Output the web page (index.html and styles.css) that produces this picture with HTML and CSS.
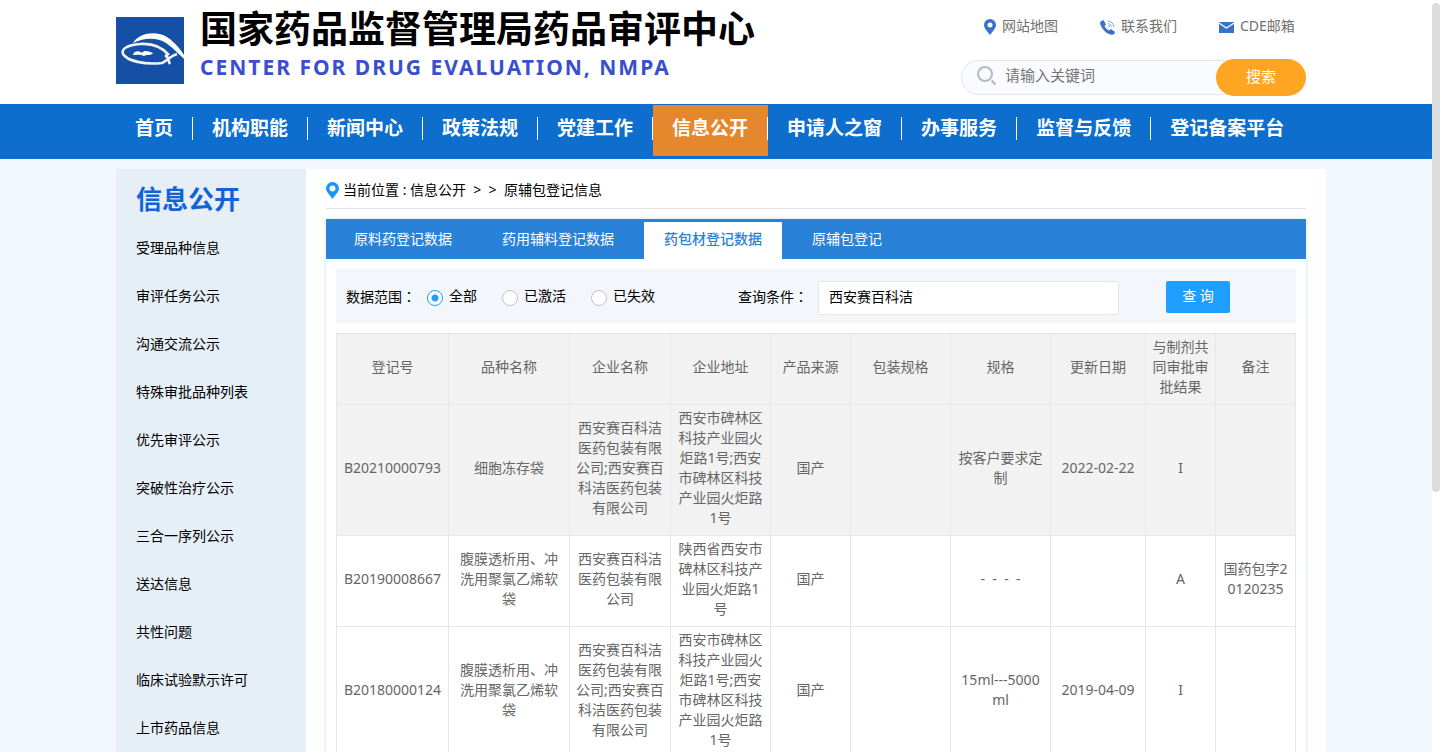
FILE: index.html
```html
<!DOCTYPE html>
<html lang="zh-CN">
<head>
<meta charset="utf-8">
<title>国家药品监督管理局药品审评中心</title>
<link rel="stylesheet" href="styles.css">
</head>
<body>
<div class="page">
  <header class="header">
    <div class="wrap header-row">
      <a class="brand" href="#">
        <svg class="logo" viewBox="0 0 74 68" aria-hidden="true">
          <rect width="68" height="67" fill="#1650a5"/>
          <path d="M17 26C24 15 41 14 51 20C60 26 66 34 73 46C66 41 59 32 50 26C40 20 28 21 17 26Z" fill="#fff"/>
          <path d="M53 38C46 30 36 26 24 27C11 28 5 32 7 37C11 44 29 48 46 46C51 44 54 39 61 37M49 38C53 40 52 44 54 47" fill="none" stroke="#f1f3f8" stroke-width="2.600" stroke-linejoin="round"/>
          <path d="M17 38C18 33 24 34 26 36C28 33 32 34 37 36C35 39 31 37 28 39C24 37 20 38 17 38Z" fill="#fff"/>
        </svg>
        <span class="brand-text">
          <span class="brand-cn">国家药品监督管理局药品审评中心</span>
          <span class="brand-en">CENTER FOR DRUG EVALUATION, NMPA</span>
        </span>
      </a>
      <div class="tools">
        <div class="quick">
          <a href="#"><svg width="12" height="16" viewBox="0 0 12 16" aria-hidden="true"><path fill-rule="evenodd" fill="#3674c9" d="M6 0a6 6 0 0 0-6 6c0 3 3 6 6 10 3-4 6-7 6-10a6 6 0 0 0-6-6zm0 3.500a2.500 2.500 0 1 1 0 5 2.500 2.500 0 0 1 0-5z"/></svg><span>网站地图</span></a>
          <a href="#"><svg width="15" height="15" viewBox="0 0 15 15" aria-hidden="true"><path fill="#3674c9" d="M.5 1.500L3.500 0 6 4.500 4.500 6C5.200 7.800 7 9.600 9 10.500L11 9 15 12 14 14.300C12 15.500 8 14.500 4.500 11 1 7.500-.7 3.500.5 1.500z"/><path fill="none" stroke="#7ba5de" d="M8 3.500q3 .5 3.500 3.500M8 1q5 .7 6 6M8 5.500q1 .3 1.500 1.500"/></svg><span>联系我们</span></a>
          <a href="#"><svg width="15" height="11" viewBox="0 0 15 11" aria-hidden="true"><path fill="#3674c9" d="M0 0h15v11H0z"/><path fill="none" stroke="#fff" stroke-width="1.300" d="M0 1l7.500 5L15 1"/></svg><span>CDE邮箱</span></a>
        </div>
        <form class="search">
          <svg width="20" height="20" viewBox="0 0 20 20" aria-hidden="true"><circle cx="8" cy="8" r="7" fill="none" stroke="#b9b9b9" stroke-width="2"/><path d="M14.500 14.500l4 4" stroke="#b9b9b9" stroke-width="2.200"/></svg>
          <input type="text" placeholder="请输入关键词" aria-label="请输入关键词">
          <button type="button">搜索</button>
        </form>
      </div>
    </div>
  </header>

  <nav class="nav">
    <div class="wrap nav-row">
      <a href="#">首页</a>
      <a href="#">机构职能</a>
      <a href="#">新闻中心</a>
      <a href="#">政策法规</a>
      <a href="#">党建工作</a>
      <a class="active" href="#">信息公开</a>
      <a href="#">申请人之窗</a>
      <a href="#">办事服务</a>
      <a href="#">监督与反馈</a>
      <a href="#">登记备案平台</a>
    </div>
  </nav>

  <div class="wrap">
    <div class="body-row">
      <aside class="side">
        <h2>信息公开</h2>
        <ul>
          <li><a href="#">受理品种信息</a></li>
          <li><a href="#">审评任务公示</a></li>
          <li><a href="#">沟通交流公示</a></li>
          <li><a href="#">特殊审批品种列表</a></li>
          <li><a href="#">优先审评公示</a></li>
          <li><a href="#">突破性治疗公示</a></li>
          <li><a href="#">三合一序列公示</a></li>
          <li><a href="#">送达信息</a></li>
          <li><a href="#">共性问题</a></li>
          <li><a href="#">临床试验默示许可</a></li>
          <li><a href="#">上市药品信息</a></li>
        </ul>
      </aside>

      <main class="main">
        <div class="crumb">
          <svg width="13" height="17" viewBox="0 0 13 17" aria-hidden="true"><path fill-rule="evenodd" fill="#1a94f5" d="M6.500 0A6.500 6.500 0 0 0 0 6.500C0 10 4 13 6.500 17 9 13 13 10 13 6.500A6.500 6.500 0 0 0 6.500 0zm0 3.500a3 3 0 1 1 0 6 3 3 0 0 1 0-6z"/></svg>
          <span>当前位置 : 信息公开&nbsp; &gt;&nbsp; &gt;&nbsp; 原辅包登记信息</span>
        </div>
        <section class="panel">
          <div class="tabs">
            <a href="#">原料药登记数据</a>
            <a href="#">药用辅料登记数据</a>
            <a class="active" href="#">药包材登记数据</a>
            <a href="#">原辅包登记</a>
          </div>
          <div class="panel-body">
            <form class="filter">
              <span class="label">数据范围<span class="colon" lang="zh-TW">：</span></span>
              <div class="radios">
                <label><input type="radio" name="range" checked><span>全部</span></label>
                <label><input type="radio" name="range"><span>已激活</span></label>
                <label><input type="radio" name="range"><span>已失效</span></label>
              </div>
              <label class="label" for="q">查询条件<span class="colon" lang="zh-TW">：</span></label>
              <input class="query" id="q" type="text" value="西安赛百科洁">
              <button type="button">查 询</button>
            </form>
            <table class="grid">
              <colgroup>
                <col class="c-no"><col class="c-name"><col class="c-corp"><col class="c-mid"><col class="c-src"><col class="c-mid"><col class="c-mid"><col class="c-date"><col class="c-res"><col class="c-src">
              </colgroup>
              <thead>
                <tr><th>登记号</th><th>品种名称</th><th>企业名称</th><th>企业地址</th><th>产品来源</th><th>包装规格</th><th>规格</th><th>更新日期</th><th>与制剂共同审批审批结果</th><th>备注</th></tr>
              </thead>
              <tbody>
                <tr class="hover"><td>B20210000793</td><td>细胞冻存袋</td><td>西安赛百科洁医药包装有限公司;西安赛百科洁医药包装有限公司</td><td>西安市碑林区科技产业园火炬路1号;西安市碑林区科技产业园火炬路1号</td><td>国产</td><td></td><td>按客户要求定制</td><td>2022-02-22</td><td>I</td><td></td></tr>
                <tr><td>B20190008667</td><td>腹膜透析用、冲洗用聚氯乙烯软袋</td><td>西安赛百科洁医药包装有限公司</td><td>陕西省西安市碑林区科技产业园火炬路1号</td><td>国产</td><td></td><td>-&nbsp; -&nbsp; -&nbsp; -</td><td></td><td>A</td><td>国药包字20120235</td></tr>
                <tr><td>B20180000124</td><td>腹膜透析用、冲洗用聚氯乙烯软袋</td><td>西安赛百科洁医药包装有限公司;西安赛百科洁医药包装有限公司</td><td>西安市碑林区科技产业园火炬路1号;西安市碑林区科技产业园火炬路1号</td><td>国产</td><td></td><td>15ml---5000ml</td><td>2019-04-09</td><td>I</td><td></td></tr>
              </tbody>
            </table>
          </div>
        </section>
      </main>
    </div>
  </div>
</div>
<div class="scroll-track"><div class="scroll-thumb"></div></div>
</body>
</html>
```

FILE: styles.css
```css
* { box-sizing: border-box; }

html, body { height: 100%; }

body {
  margin: 0;
  display: flex;
  overflow: hidden;
  background: #fff;
  color: #000;
  font: 14px/20px "Noto Sans", "Noto Sans CJK SC", sans-serif;
}

a { color: inherit; text-decoration: none; }
input, button { font: inherit; }

.page {
  flex: 1;
  min-width: 0;
  height: 100vh;
  overflow: hidden;
  background: #f3f7ff;
}

.wrap { max-width: 1200px; margin: 0 auto; }

/* header */
.header { background: #fff; }
.header-row { display: flex; justify-content: space-between; height: 104px; }
.brand { display: flex; gap: 10px; }
.logo { width: 74px; height: 68px; margin-top: 17px; }
.brand-text { display: flex; flex-direction: column; white-space: nowrap; }
.brand-cn { font-size: 37px; line-height: 48px; padding-top: 5px; font-weight: 700; }
.brand-en { font-size: 21px; line-height: 28px; font-weight: 700; letter-spacing: 2px; color: #3a4ed1; }

.tools { width: 345px; margin-right: 10px; padding-top: 17px; }
.quick { display: flex; gap: 42px; padding: 0 12px 0 23px; color: #707070; white-space: nowrap; }
.quick a { display: flex; align-items: center; gap: 6px; }
.quick span { line-height: 18px; padding-bottom: 2px; }

.search {
  display: flex;
  align-items: center;
  margin-top: 23px;
  height: 35px;
  padding-left: 15px;
  border: 1px solid #e4e5e7;
  border-radius: 18px;
  background: #fafbff;
}
.search svg { flex: none; margin-bottom: 4px; }
.search input { flex: 1; min-width: 0; border: 0; padding: 0 0 6px 8px; background: none; outline: 0; font-size: 15px; }
.search input::placeholder { color: #757575; }
.search button { width: 90px; height: 37px; margin-right: -1px; padding: 0 0 3px; border: 0; border-radius: 19px; background: #ffa521; color: #fff; font-size: 15px; }

/* navigation */
.nav { background: #0d6ecd; }
.nav-row { display: flex; height: 55px; padding-top: 1px; }
.nav a {
  display: flex;
  height: 51px;
  padding-left: 19px;
  color: #fff;
  font-size: 19px;
  font-weight: 700;
  line-height: 46px;
  white-space: nowrap;
}
.nav a::after { content: ""; width: 1px; height: 23px; margin-left: 19px; margin-top: 12px; background: #fff; }
.nav a:last-child::after { background: none; }
.nav a.active { background: #e5872c; }

/* body */
.body-row { display: flex; margin: 10px -10px 0 0; background: #fff; }
.side { flex: none; width: 190px; padding: 14px 20px 20px; background: #e6eef6; }
.side h2 { margin: 0; font-size: 26px; line-height: 32px; color: #1263d8; }
.side ul { margin: 23px 0 0; padding: 0; list-style: none; display: grid; gap: 28px; }
.side a { display: block; white-space: nowrap; }

.main { flex: 1; min-width: 0; padding: 0 20px 20px; }
.crumb { display: flex; align-items: center; gap: 4px; height: 40px; padding-top: 4px; border-bottom: 1px solid #e2e2e2; }
.crumb span { padding-bottom: 1px; }

.panel { margin-top: 10px; box-shadow: 0 0 4px #cfdcee; }
.tabs { display: flex; align-items: flex-end; gap: 10px; height: 40px; padding-left: 8px; background: #2a82d8; color: #fff; }
.tabs a { height: 37px; padding: 0 20px; line-height: 34px; }
.tabs .active { background: #fff; color: #2a82d8; font-weight: 500; }
.panel-body { padding: 10px; }

.filter { display: flex; height: 54px; padding: 12px 10px 0; background: #f3f6fa; white-space: nowrap; }
.label { line-height: 30px; }
.colon { font-family: "Noto Sans CJK TC", sans-serif; }
.radios { display: flex; gap: 25px; margin: 0 83px 0 11px; }
.radios label { display: flex; gap: 6px; line-height: 30px; }
.radios input {
  appearance: none;
  width: 16px;
  height: 16px;
  margin: 9px 0 0;
  border: 1px solid #c2c2c2;
  border-radius: 50%;
  background: #fff;
}
.radios input:checked { border-color: #1e9fff; background: radial-gradient(circle, #1e9fff 3px, #fff 4px); }
.query { width: 301px; height: 34px; margin-left: 10px; padding: 0 10px 5px; border: 1px solid #e6e6e6; border-radius: 2px; background: #fff; }
.filter button { width: 64px; height: 32px; margin-left: 47px; padding: 0 0 3px; border: 0; border-radius: 2px; background: #1e9fff; color: #fff; }

.grid { width: 100%; margin-top: 10px; border-collapse: collapse; table-layout: fixed; color: #666; background: #fff; }
.grid th, .grid td { padding: 3px 6px 7px; border: 1px solid #e6e6e6; font-weight: 400; text-align: center; word-break: break-all; }
.grid thead, .grid .hover { background: #f2f2f2; }
.c-no { width: 112px; }
.c-name { width: 121px; }
.c-corp { width: 101px; }
.c-mid { width: 100px; }
.c-src { width: 80px; }
.c-date { width: 95px; }
.c-res { width: 70px; }

/* scrollbar */
.scroll-track { flex: none; width: 8px; height: 100vh; padding-top: 3px; background: #fff; }
.scroll-thumb { height: 65vh; border-radius: 4px; background: #ddd; }
```
